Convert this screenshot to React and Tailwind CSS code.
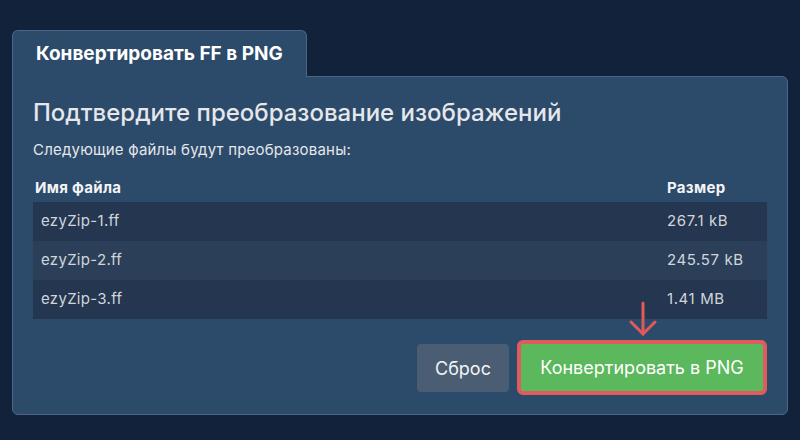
import React from "react";

let files = [
  { id: 1, name: "ezyZip-1.ff", size: "267.1 kB" },
  { id: 2, name: "ezyZip-2.ff", size: "245.57 kB" },
  { id: 3, name: "ezyZip-3.ff", size: "1.41 MB" },
];

let App = () => {
  return (
    <div className="w-[800px] h-[440px] bg-[#11223a] pt-[30px] px-3 font-['Inter',sans-serif]">
      {/* tab */}
      <div className="relative z-10 inline-flex items-center h-[47px] px-[23px] -mb-px bg-[#2c4a6a] border border-b-0 border-[#4b6788] rounded-t-md">
        <span className="text-white text-[19px] font-bold">Конвертировать FF в PNG</span>
      </div>

      {/* panel */}
      <div className="bg-[#2c4a6a] border border-[#4b6788] rounded-b-md rounded-tr-md px-5 pt-[20px] pb-[19px]">
        <h2 className="text-[#e5e7eb] text-[24px] leading-8 font-medium">
          Подтвердите преобразование изображений
        </h2>
        <p className="text-[#e5e7eb] text-[15px] leading-5 mt-[11px] tracking-[0.2px]">Следующие файлы будут преобразованы:</p>

        <div className="mt-[18px]">
          <div className="flex text-[#f3f4f6] text-[15px] font-bold leading-5 pb-[4px]">
            <div className="flex-1 pl-0.5 tracking-[0.3px]">Имя файла</div>
            <div className="w-[100px] tracking-[0.3px]">Размер</div>
          </div>
          {files.map((file, i) => (
            <div
              key={file.id}
              className={
                "flex items-center h-[39px] text-[15px] text-[#d1d5db] " +
                (i % 2 === 0 ? "bg-[#243650]" : "bg-[#2b4058]")
              }
            >
              <div className="flex-1 pl-2 tracking-[0.3px]">{file.name}</div>
              <div className="w-[100px] tracking-[0.6px]">{file.size}</div>
            </div>
          ))}
        </div>

        <div className="flex justify-end items-end gap-2 mt-[21px]">
          <button className="h-[48px] w-[92px] mb-[3px] rounded bg-[#4a5d73] text-[#f3f4f6] text-[18px]">
            Сброс
          </button>
          <div className="relative">
            <svg
              className="absolute left-[111px] -top-[39px]"
              width="30"
              height="36"
              viewBox="0 0 30 36"
              fill="none"
              stroke="#e05a5a"
              strokeWidth="3"
              strokeLinecap="round"
            >
              <path d="M15 2 V33" />
              <path d="M3 21 L15 33 L27 21" />
            </svg>
            <button className="h-[55px] w-[250px] rounded-md border-4 border-[#e05c5c] bg-[#5cb85c] text-white text-[18px]">
              Конвертировать в PNG
            </button>
          </div>
        </div>
      </div>
    </div>
  );
};

export default App;
